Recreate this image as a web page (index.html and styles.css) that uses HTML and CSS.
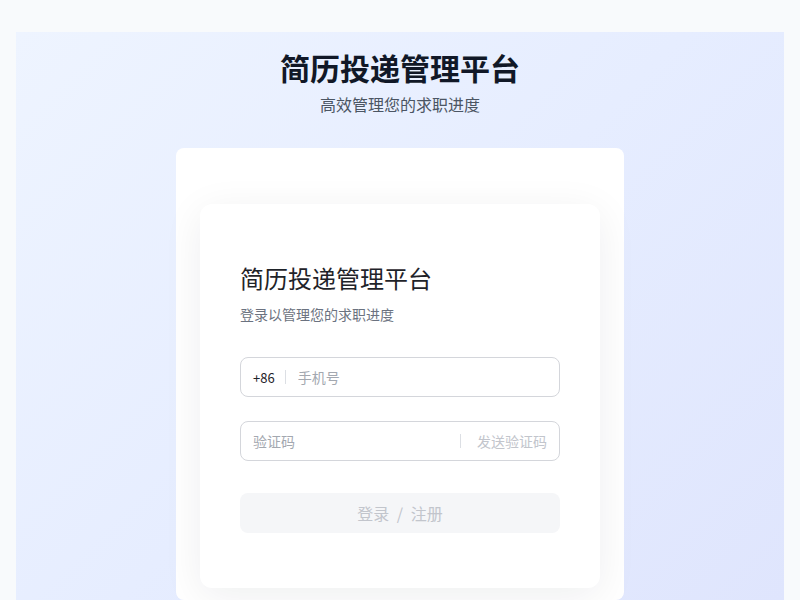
FILE: index.html
```html
<!DOCTYPE html>
<html lang="zh-CN">
<head>
<meta charset="utf-8">
<title>简历投递管理平台</title>
<link rel="stylesheet" href="styles.css">
</head>
<body>
<div class="page">
  <header class="hero">
    <h1 class="hero-title">简历投递管理平台</h1>
    <p class="hero-sub">高效管理您的求职进度</p>
  </header>
  <section class="outer-card">
    <div class="login-card">
      <h2 class="login-title">简历投递管理平台</h2>
      <p class="login-sub">登录以管理您的求职进度</p>
      <div class="field">
        <span class="prefix">+86</span>
        <span class="divider"></span>
        <input class="input" type="text" placeholder="手机号">
      </div>
      <div class="field field-code">
        <input class="input" type="text" placeholder="验证码">
        <span class="divider"></span>
        <span class="send">发送验证码</span>
      </div>
      <button class="submit" type="button">登录 / 注册</button>
    </div>
  </section>
</div>
</body>
</html>
```
FILE: styles.css
```css
* { box-sizing: border-box; }
html, body { margin: 0; padding: 0; height: 100%; }
body {
  background: #f8fafc;
  font-family: "Noto Sans CJK SC", "Noto Sans", sans-serif;
  overflow: hidden;
}
.page {
  margin: 32px 16px 0;
  min-height: 568px;
  background: linear-gradient(135deg, #eef4ff 0%, #e6edff 50%, #dfe5fd 100%);
  padding-top: 15px;
  display: flex;
  flex-direction: column;
  align-items: center;
}
.hero { text-align: center; }
.hero-title {
  margin: 0;
  font-size: 30px;
  line-height: 40px;
  font-weight: 700;
  color: #111827;
}
.hero-sub {
  margin: 5px 0 0;
  font-size: 16px;
  line-height: 24px;
  color: #4b5563;
}
.outer-card {
  margin-top: 32px;
  width: 448px;
  background: #ffffff;
  border-radius: 8px;
  padding: 56px 24px 0;
  height: 452px;
}
.login-card {
  background: #ffffff;
  border-radius: 12px;
  box-shadow: 0 8px 40px rgba(15, 23, 42, 0.07);
  padding: 58px 40px 55px;
  display: flex;
  flex-direction: column;
}
.login-title {
  margin: 0;
  font-size: 24px;
  line-height: 32px;
  font-weight: 400;
  color: #1f2329;
}
.login-sub {
  margin: 9px 0 0;
  font-size: 14px;
  line-height: 22px;
  color: #6b7280;
}
.field {
  margin-top: 32px;
  height: 40px;
  border: 1px solid #d4d6db;
  border-radius: 8px;
  display: flex;
  align-items: center;
  padding: 0 12px;
}
.field-code { margin-top: 24px; }
.prefix {
  font-size: 13px;
  color: #1f2329;
}
.divider {
  width: 1px;
  height: 14px;
  background: #dcdfe4;
  margin: 0 12px 0 10px;
}
.field-code .divider { margin: 0 16px 0 12px; }
.input {
  flex: 1;
  min-width: 0;
  border: 0;
  outline: none;
  background: transparent;
  padding: 0;
  font: inherit;
  font-size: 14px;
  color: #1f2329;
}
.input::placeholder { color: #a3a8b0; }
.send {
  font-size: 14px;
  color: #c2c5cc;
}
.submit {
  margin-top: 32px;
  height: 40px;
  border: 0;
  border-radius: 8px;
  background: #f5f6f8;
  color: #c2c5cc;
  font: inherit;
  font-size: 16px;
  word-spacing: 4px;
}
```
